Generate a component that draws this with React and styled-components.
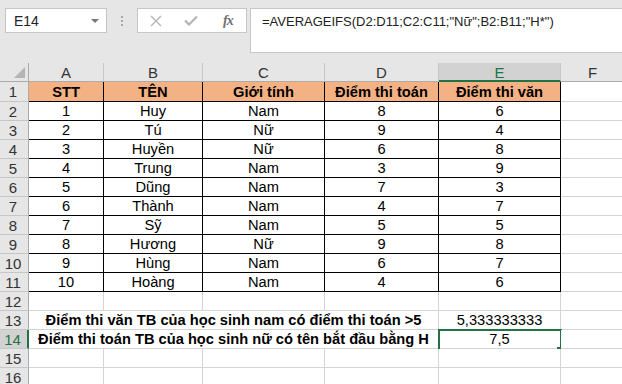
import React from "react";
import styled, { createGlobalStyle, css } from "styled-components";

const GlobalStyle = createGlobalStyle`
  body {
    margin: 0;
    overflow: hidden;
    font-family: "Liberation Sans", Arial, sans-serif;
  }
`;

const Window = styled.div`
  width: 622px;
  height: 384px;
  background: #e6e6e6;
  overflow: hidden;
`;

const FormulaBar = styled.div`
  height: 63px;
  box-sizing: border-box;
  padding: 8px 0 0 5px;
  display: flex;
  align-items: flex-start;
`;

const NameBox = styled.div`
  width: 102px;
  height: 25px;
  box-sizing: border-box;
  background: #fff;
  border: 1px solid #c6c6c6;
  display: flex;
  align-items: center;
  justify-content: space-between;
  padding: 0 7px 0 8px;
  font-size: 14px;
  color: #222;
`;

const DropArrow = styled.span`
  width: 0;
  height: 0;
  border-left: 4px solid transparent;
  border-right: 4px solid transparent;
  border-top: 4px solid #777;
`;

const Grip = styled.div`
  width: 30px;
  height: 25px;
  display: flex;
  flex-direction: column;
  align-items: center;
  justify-content: center;
  gap: 2px;
  span {
    width: 2px;
    height: 2px;
    background: #a8a8a8;
  }
`;

const FxButtons = styled.div`
  width: 110px;
  height: 25px;
  box-sizing: border-box;
  background: #fff;
  border: 1px solid #c6c6c6;
  display: flex;
  align-items: center;
  padding: 0 0 0 12px;
  gap: 22px;
  color: #b0b0b0;
`;

const Fx = styled.span`
  font-family: "Liberation Serif", serif;
  font-style: italic;
  font-weight: bold;
  font-size: 14px;
  color: #707070;
  margin-left: 3px;
  letter-spacing: -1px;
`;

const FormulaInput = styled.div`
  flex: 1;
  margin-left: 3px;
  height: 45px;
  box-sizing: border-box;
  background: #fff;
  border: 1px solid #c6c6c6;
  border-right: none;
  padding: 4px 0 0 11px;
  font-size: 13px;
  line-height: 17px;
  color: #222;
  white-space: nowrap;
`;

const Sheet = styled.div`
  display: grid;
  grid-template-columns: 29px 75px 99px 122px 114px 122px 64px;
  grid-template-rows: 19px 20px;
  grid-auto-rows: 19px;
  background: #fff;
`;

const Corner = styled.div`
  background: #e6e6e6;
  border-right: 1px solid #ababab;
  border-bottom: 1px solid #ababab;
  position: relative;
  box-sizing: border-box;
  &::after {
    content: "";
    position: absolute;
    right: 3px;
    bottom: 3px;
    width: 0;
    height: 0;
    border-left: 11px solid transparent;
    border-bottom: 11px solid #b4b4b4;
  }
`;

const ColHead = styled.div`
  box-sizing: border-box;
  background: ${(p) => (p.$active ? "#d2d2d2" : "#e6e6e6")};
  border-right: 1px solid #c6c6c6;
  border-bottom: ${(p) => (p.$active ? "2px solid #217346" : "1px solid #ababab")};
  color: ${(p) => (p.$active ? "#217346" : "#333")};
  font-size: 15px;
  display: flex;
  align-items: center;
  justify-content: center;
  padding-top: ${(p) => (p.$active ? "1px" : "0")};
`;

const RowHead = styled.div`
  box-sizing: border-box;
  background: ${(p) => (p.$active ? "#d2d2d2" : "#e6e6e6")};
  border-right: ${(p) => (p.$active ? "2px solid #217346" : "1px solid #ababab")};
  border-bottom: 1px solid #c6c6c6;
  color: ${(p) => (p.$active ? "#217346" : "#333")};
  font-size: 15px;
  display: flex;
  align-items: center;
  justify-content: center;
  padding-right: 2px;
`;

const Cell = styled.div`
  box-sizing: border-box;
  border-right: 1px solid ${(p) => (p.$boxed ? "#000" : "#d4d4d4")};
  border-bottom: 1px solid ${(p) => (p.$boxed ? "#000" : "#d4d4d4")};
  background: ${(p) => p.$fill || "#fff"};
  font-size: 14.67px;
  font-weight: ${(p) => (p.$bold ? "bold" : "normal")};
  color: #000;
  display: flex;
  align-items: center;
  justify-content: center;
  white-space: nowrap;
  position: relative;
  ${(p) => p.$span && css`grid-column: span ${p.$span};`}
  ${(p) =>
    p.$selected &&
    css`
      &::before {
        content: "";
        position: absolute;
        left: -1px;
        top: -1px;
        right: -2px;
        bottom: -3px;
        border: 2px solid #217346;
        pointer-events: none;
      }
      &::after {
        content: "";
        position: absolute;
        right: -3px;
        bottom: -5px;
        width: 6px;
        height: 6px;
        background: #217346;
      }
    `}
`;

const columns = ["A", "B", "C", "D", "E", "F"];
const headers = ["STT", "TÊN", "Giới tính", "Điểm thi toán", "Điểm thi văn"];
const students = [
  [1, "Huy", "Nam", 8, 6],
  [2, "Tú", "Nữ", 9, 4],
  [3, "Huyền", "Nữ", 6, 8],
  [4, "Trung", "Nam", 3, 9],
  [5, "Dũng", "Nam", 7, 3],
  [6, "Thành", "Nam", 4, 7],
  [7, "Sỹ", "Nam", 5, 5],
  [8, "Hương", "Nữ", 9, 8],
  [9, "Hùng", "Nam", 6, 7],
  [10, "Hoàng", "Nam", 4, 6],
];

const CrossIcon = () => (
  <svg width="12" height="12" viewBox="0 0 12 12">
    <path d="M1 1L11 11M11 1L1 11" stroke="#b4b4b4" strokeWidth="1.4" fill="none" />
  </svg>
);

const CheckIcon = () => (
  <svg width="14" height="11" viewBox="0 0 14 11">
    <path d="M1 5.5L5 9.5L13 1.5" stroke="#b4b4b4" strokeWidth="2.2" fill="none" />
  </svg>
);

const EmptyRow = ({ n }) => (
  <>
    <RowHead>{n}</RowHead>
    {columns.map((c) => (
      <Cell key={c} />
    ))}
  </>
);

export default function App() {
  return (
    <Window>
      <GlobalStyle />
      <FormulaBar>
        <NameBox>
          E14
          <DropArrow />
        </NameBox>
        <Grip>
          <span />
          <span />
          <span />
        </Grip>
        <FxButtons>
          <CrossIcon />
          <CheckIcon />
          <Fx>fx</Fx>
        </FxButtons>
        <FormulaInput>=AVERAGEIFS(D2:D11;C2:C11;"Nữ";B2:B11;"H*")</FormulaInput>
      </FormulaBar>

      <Sheet>
        <Corner />
        {columns.map((c) => (
          <ColHead key={c} $active={c === "E"}>
            {c}
          </ColHead>
        ))}

        <RowHead>1</RowHead>
        {headers.map((h) => (
          <Cell key={h} $boxed $bold $fill="#f4b183">
            {h}
          </Cell>
        ))}
        <Cell />

        {students.map((s, i) => (
          <React.Fragment key={i}>
            <RowHead>{i + 2}</RowHead>
            {s.map((v, j) => (
              <Cell key={j} $boxed>
                {v}
              </Cell>
            ))}
            <Cell />
          </React.Fragment>
        ))}

        <EmptyRow n={12} />

        <RowHead>13</RowHead>
        <Cell $span={4} $bold>
          Điểm thi văn TB của học sinh nam có điểm thi toán &gt;5
        </Cell>
        <Cell>5,333333333</Cell>
        <Cell />

        <RowHead $active>14</RowHead>
        <Cell $span={4} $bold>
          Điểm thi toán TB của học sinh nữ có tên bắt đầu bằng H
        </Cell>
        <Cell $selected>7,5</Cell>
        <Cell />

        <EmptyRow n={15} />
        <EmptyRow n={16} />
      </Sheet>
    </Window>
  );
}
